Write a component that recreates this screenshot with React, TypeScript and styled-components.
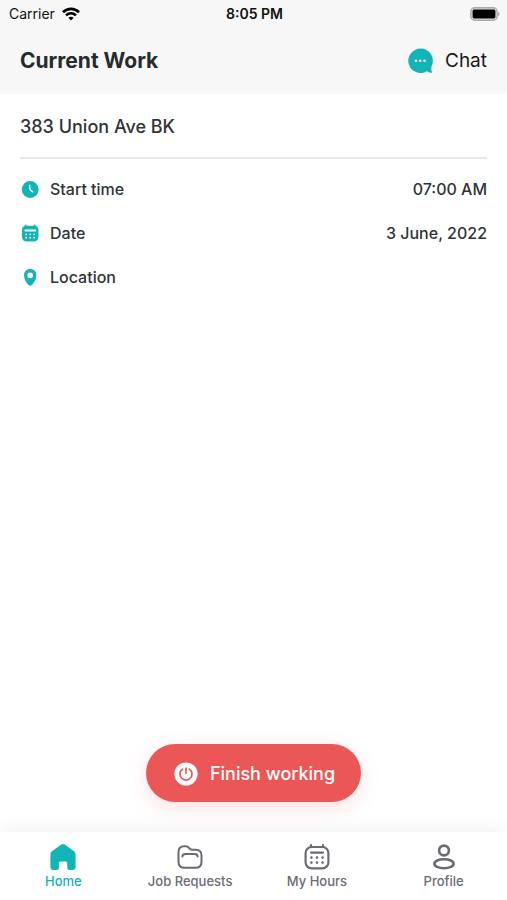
import React from "react";
import styled, { createGlobalStyle } from "styled-components";

const TEAL = "#12b5b7";
const INK = "#2f3436";
const GREY = "#6c6b74";

const GlobalStyle = createGlobalStyle`
  *, *::before, *::after { box-sizing: border-box; }
  body {
    margin: 0;
    background: #fff;
    color: ${INK};
    font-family: Inter, "Liberation Sans", sans-serif;
  }
  button { font-family: inherit; cursor: pointer; }
`;

const Screen = styled.div`
  display: flex;
  flex-direction: column;
  min-height: 100vh;
`;

const TopArea = styled.div`
  background: #f7f7f7;
`;

const StatusBar = styled.div`
  display: grid;
  grid-template-columns: 1fr auto 1fr;
  align-items: center;
  height: 28px;
  padding: 0 7px 0 9px;
  color: #111;
  font-size: 14px;
  line-height: 20px;
`;

const Carrier = styled.div`
  display: flex;
  align-items: center;
  gap: 7px;
`;

const Clock = styled.time`
  font-weight: 600;
`;

const BatteryIcon = styled.svg`
  justify-self: end;
`;

const Header = styled.header`
  display: flex;
  align-items: center;
  justify-content: space-between;
  height: 66px;
  padding: 0 20px;
`;

const Title = styled.h1`
  margin: 0;
  color: #252b2e;
  font-size: 21px;
  font-weight: 700;
  line-height: 28px;
`;

const ChatButton = styled.button`
  display: flex;
  align-items: center;
  gap: 12px;
  padding: 0;
  border: 0;
  background: none;
  color: #17191a;
  font-size: 19px;
  line-height: 28px;
`;

const Content = styled.main`
  flex: 1;
  padding: 0 20px;
`;

const Address = styled.h2`
  margin: 0;
  padding: 19px 0 16px;
  border-bottom: 2px solid #e6e7e7;
  font-size: 18px;
  font-weight: 450;
  line-height: 28px;
`;

const Details = styled.dl`
  margin: 0;
  padding-top: 8px;
`;

const DetailRow = styled.div`
  display: flex;
  align-items: center;
  height: 44px;
  font-size: 16px;
  font-weight: 450;
  line-height: 24px;
`;

const DetailLabel = styled.dt`
  display: flex;
  align-items: center;
  gap: 10px;
`;

const DetailValue = styled.dd`
  margin: 0 0 0 auto;
`;

const ActionArea = styled.div`
  display: flex;
  justify-content: center;
  padding: 0 20px 30px;
`;

const FinishButton = styled.button`
  display: flex;
  align-items: center;
  gap: 12px;
  height: 58px;
  padding: 2px 26px 0 28px;
  border: 0;
  border-radius: 29px;
  background: #eb5757;
  box-shadow: 0 6px 20px rgba(235, 87, 87, 0.18);
  color: #fff;
  font-size: 18px;
  font-weight: 500;
  line-height: 28px;
`;

const TabBar = styled.nav`
  display: grid;
  grid-template-columns: repeat(4, 1fr);
  height: 68px;
  padding-top: 11px;
  background: #fff;
  box-shadow: 0 -4px 16px rgba(0, 0, 0, 0.05);
`;

const Tab = styled.a<{ $active?: boolean }>`
  display: flex;
  flex-direction: column;
  align-items: center;
  color: ${(p) => (p.$active ? TEAL : GREY)};
  font-size: 13px;
  font-weight: 500;
  line-height: 20px;
  text-decoration: none;
  white-space: nowrap;
`;

const WifiIcon = () => (
  <svg width="18" height="14" viewBox="0 0 18 14" fill="none" stroke="#000" strokeWidth="2.6" aria-hidden="true">
    <path d="M1 5.2C5.7.7 12.3.7 17 5.2" />
    <path d="M4 8.4c2.9-2.7 7.1-2.7 10 0" />
    <path d="M6.4 10.7c1.500-1.400 3.700-1.400 5.200 0L9 13.400z" fill="#000" stroke="none" />
  </svg>
);

const Battery = () => (
  <BatteryIcon width="30" height="14" viewBox="0 0 30 14" role="img" aria-label="Battery full">
    <rect x=".8" y=".8" width="26.4" height="12.4" rx="4" fill="#ddd" stroke="#aaa" strokeWidth="1.4" />
    <rect x="2.6" y="2.6" width="22.8" height="8.8" rx="1.6" fill="#000" />
    <path d="M28.2 4.8c1.8.7 1.8 3.7 0 4.4z" fill="#aaa" />
  </BatteryIcon>
);

const ChatIcon = () => (
  <svg width="25" height="26" viewBox="0 0 25 26" aria-hidden="true">
    <path
      d="M12.4.6A12.2 12.2 0 1 0 18.7 23.3c1.5.9 3.1 1.5 4.7 1.5.8 0 1-.7.6-1.2-.7-.9-1-2-.4-5.300A12.2 12.2 0 0 0 12.4.6z"
      fill={TEAL}
    />
    <g fill="#fff">
      <circle cx="8" cy="12.7" r="1.3" />
      <circle cx="12.3" cy="12.7" r="1.3" />
      <circle cx="16.6" cy="12.7" r="1.3" />
    </g>
  </svg>
);

const ClockIcon = () => (
  <svg width="20" height="20" viewBox="0 0 20 20" aria-hidden="true">
    <circle cx="10.2" cy="10.5" r="8.4" fill={TEAL} />
    <path d="M9.700 6.200v3.400c0 1.300 1 1.900 3 3.200" fill="none" stroke="#fff" strokeWidth="1.500" strokeLinecap="round" strokeLinejoin="round" />
  </svg>
);

const DateIcon = () => (
  <svg width="20" height="20" viewBox="0 0 20 20" aria-hidden="true">
    <path
      d="M5.600 1.400c.6 0 .9.4.9.9v.5h7.400v-.5c0-.5.3-.9.9-.9s.9.4.9.9v.8c1.800.6 2.800 2 2.800 4.100v6.200c0 3.300-1.900 5.100-5.100 5.100H7c-3.200 0-5.100-1.800-5.100-5.100V7.200c0-2.100 1-3.500 2.800-4.100v-.8c0-.5.3-.9.9-.9z"
      fill={TEAL}
    />
    <path d="M5.400 7.400h9.800" stroke="#fff" strokeWidth="2" strokeLinecap="round" />
    <g fill="#fff">
      <circle cx="6.200" cy="11.300" r=".9" />
      <circle cx="10.200" cy="11.300" r=".9" />
      <circle cx="14.200" cy="11.300" r=".9" />
      <circle cx="6.200" cy="14.700" r=".9" />
      <circle cx="10.200" cy="14.700" r=".9" />
      <circle cx="14.200" cy="14.700" r=".9" />
    </g>
  </svg>
);

const PinIcon = () => (
  <svg width="20" height="20" viewBox="0 0 20 20" aria-hidden="true">
    <path
      fillRule="evenodd"
      d="M10.200 2C6.500 2 4 4.700 4 8.200c0 4 2.300 7.600 4.600 9.800 1.100 1 2.100 1 3.200 0 2.300-2.200 4.600-5.800 4.600-9.800C16.400 4.700 13.900 2 10.200 2zm0 3.400a2.900 2.900 0 1 1 0 5.800 2.900 2.900 0 0 1 0-5.800z"
      fill={TEAL}
    />
  </svg>
);

const PowerIcon = () => (
  <svg width="24" height="24" viewBox="0 0 24 24" aria-hidden="true">
    <circle cx="12" cy="12" r="11.600" fill="#fff" />
    <path
      d="M8.600 7.100a6 6 0 1 0 6.800 0M12 6.200v5"
      fill="none"
      stroke="#eb5757"
      strokeWidth="1.700"
      strokeLinecap="round"
    />
  </svg>
);

const HomeIcon = () => (
  <svg width="28" height="28" viewBox="0 0 28 28" aria-hidden="true">
    <path
      d="M12 1.700c1.300-1 2.700-1 4 0l8.300 6c1.500 1.100 2.300 2.300 2.300 4.200v12c0 2-1 3-3 3h-3.100c-1.500 0-2.200-.8-2.200-2.200v-4.300c0-1.300-.7-2-2-2h-4.400c-1.300 0-2 .7-2 2v4.300c0 1.400-.8 2.200-2.200 2.200H4.400c-2 0-3-1-3-3v-12c0-1.900.8-3.100 2.300-4.200z"
      fill={TEAL}
    />
  </svg>
);

const FolderIcon = () => (
  <svg width="28" height="28" viewBox="0 0 28 28" fill="none" stroke={GREY} strokeWidth="2" strokeLinecap="round" strokeLinejoin="round" aria-hidden="true">
    <path d="M2.500 9c0-3.600 2-5.700 5.300-5.700h2.100c3 0 3.200 3.400 6 3.400h3.800c3.800 0 5.800 2 5.800 5.600v6.400c0 4-2.100 6.100-6.100 6.100H8.600c-4 0-6.100-2.100-6.100-6.100z" />
    <path d="M6.400 13.400c.2-1.600 1.200-2.400 2.900-2.400h9.400c1.700 0 2.700.8 2.900 2.400" />
  </svg>
);

const HoursIcon = () => (
  <svg width="28" height="28" viewBox="0 0 28 28" fill="none" stroke={GREY} strokeWidth="2.200" strokeLinecap="round" aria-hidden="true">
    <rect x="2.600" y="4" width="22.800" height="21.400" rx="6" />
    <path d="M8 2.200v2M20 2.200v2M8 9.600h12" />
    <g fill={GREY} stroke="none">
      <circle cx="8.400" cy="14.600" r="1.300" />
      <circle cx="14" cy="14.600" r="1.300" />
      <circle cx="19.600" cy="14.600" r="1.300" />
      <circle cx="8.400" cy="19.600" r="1.300" />
      <circle cx="14" cy="19.600" r="1.300" />
      <circle cx="19.600" cy="19.600" r="1.300" />
    </g>
  </svg>
);

const ProfileIcon = () => (
  <svg width="28" height="28" viewBox="0 0 28 28" fill="none" stroke={GREY} strokeWidth="2.600" aria-hidden="true">
    <circle cx="14" cy="7.500" r="4.900" />
    <ellipse cx="14" cy="20.700" rx="9.600" ry="4.500" />
  </svg>
);

const details = [
  { label: "Start time", value: "07:00 AM", Icon: ClockIcon },
  { label: "Date", value: "3 June, 2022", Icon: DateIcon },
  { label: "Location", value: "", Icon: PinIcon },
];

const tabs = [
  { label: "Home", Icon: HomeIcon, active: true },
  { label: "Job Requests", Icon: FolderIcon },
  { label: "My Hours", Icon: HoursIcon },
  { label: "Profile", Icon: ProfileIcon },
];

export default function App() {
  return (
    <>
      <GlobalStyle />
      <Screen>
        <TopArea>
          <StatusBar>
            <Carrier>
              Carrier
              <WifiIcon />
            </Carrier>
            <Clock>8:05 PM</Clock>
            <Battery />
          </StatusBar>
          <Header>
            <Title>Current Work</Title>
            <ChatButton type="button">
              <ChatIcon />
              Chat
            </ChatButton>
          </Header>
        </TopArea>
        <Content>
          <Address>383 Union Ave BK</Address>
          <Details>
            {details.map(({ label, value, Icon }) => (
              <DetailRow key={label}>
                <DetailLabel>
                  <Icon />
                  {label}
                </DetailLabel>
                <DetailValue>{value}</DetailValue>
              </DetailRow>
            ))}
          </Details>
        </Content>
        <ActionArea>
          <FinishButton type="button">
            <PowerIcon />
            Finish working
          </FinishButton>
        </ActionArea>
        <TabBar>
          {tabs.map(({ label, Icon, active }) => (
            <Tab key={label} href="#" $active={active} aria-current={active ? "page" : undefined}>
              <Icon />
              {label}
            </Tab>
          ))}
        </TabBar>
      </Screen>
    </>
  );
}
